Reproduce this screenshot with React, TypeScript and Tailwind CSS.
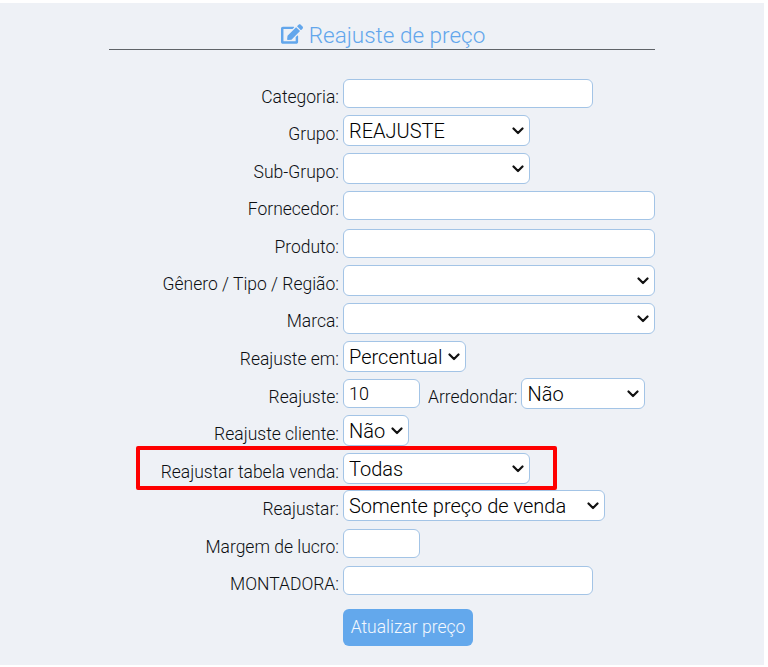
import React from "react";

const font = "font-['Roboto',sans-serif]";
const field = "block h-[29px] rounded-[6px] border border-[#a3c4e6] bg-white px-[5px] text-[18px] font-light leading-[27px] text-black outline-none";

function Select({ width, value, extra }: { width: string; value?: string; extra?: string }) {
  return (
    <div className={`relative shrink-0 ${width}`}>
      <select
        defaultValue={value ?? ""}
        className={`block h-[31px] w-full appearance-none rounded-[6px] border border-[#a3c4e6] bg-white pl-[5px] pr-[20px] text-[20px] font-light text-black outline-none ${extra ?? ""}`}
      >
        <option>{value ?? ""}</option>
      </select>
      <svg
        className="pointer-events-none absolute right-[6px] top-[12px]"
        width="12"
        height="8"
        viewBox="0 0 12 8"
        fill="none"
        stroke="#111"
        strokeWidth="2.2"
        strokeLinecap="round"
        strokeLinejoin="round"
        aria-hidden="true"
      >
        <path d="M1.5 1.5 6 6l4.5-4.5" />
      </svg>
    </div>
  );
}

function Label({ children, offset }: { children: React.ReactNode; offset: string }) {
  return <label className={`w-[230px] shrink-0 text-right text-[17.5px] font-light leading-[19px] text-[#0c0f12] ${offset}`}>{children}</label>;
}

function Row({ label, mt, offset, children }: { label: string; mt: string; offset: string; children: React.ReactNode }) {
  return (
    <div className={`flex items-start gap-[4px] ${mt}`}>
      <Label offset={offset}>{label}</Label>
      {children}
    </div>
  );
}

export default function App() {
  return (
    <div className={`${font} h-[667px] w-[768px] bg-white pt-[3px] pr-[4px]`}>
      <div className="relative h-[662px] bg-[#eef1f6] pt-[15px]">
        <div className="ml-[109px] w-[546px]">
          <h1 className="flex h-[32px] items-end justify-center gap-[6px] border-b border-[#5f6368] pl-[2px] text-[22.5px] font-light leading-[28px] text-[#62a6ec]">
            <svg width="22" height="20" viewBox="0 0 576 512" fill="currentColor" aria-hidden="true" className="mb-[5px]">
              <path d="M402.6 83.2l90.2 90.2c3.8 3.8 3.8 10 0 13.8L274.4 405.6l-92.8 10.3c-12.4 1.4-22.9-9.1-21.5-21.5l10.3-92.8L388.8 83.2c3.8-3.8 10-3.8 13.8 0zm162-22.9l-48.8-48.8c-15.2-15.2-39.9-15.2-55.2 0l-35.4 35.4c-3.8 3.8-3.8 10 0 13.8l90.2 90.2c3.8 3.8 10 3.8 13.8 0l35.4-35.4c15.2-15.3 15.2-40 0-55.2zM384 346.2V448H64V128h229.8c3.2 0 6.2-1.3 8.5-3.5l40-40c7.6-7.6 2.2-20.5-8.5-20.5H48C21.5 64 0 85.5 0 112v352c0 26.5 21.5 48 48 48h352c26.5 0 48-21.5 48-48V306.2c0-10.7-12.9-16-20.5-8.5l-40 40c-2.2 2.3-3.5 5.3-3.5 8.5z" />
            </svg>
            <span>Reajuste de preço</span>
          </h1>

          <div className="mt-[29px]">
            <Row label="Categoria:" mt="mt-0" offset="mt-[9px]"><input className={`${field} w-[250px]`} /></Row>
            <Row label="Grupo:" mt="mt-[7px]" offset="mt-[10px]"><Select width="w-[187px]" value="REAJUSTE" /></Row>
            <Row label="Sub-Grupo:" mt="mt-[7px]" offset="mt-[10px]"><Select width="w-[187px]" /></Row>
            <Row label="Fornecedor:" mt="mt-[7px]" offset="mt-[9px]"><input className={`${field} w-[312px]`} /></Row>
            <Row label="Produto:" mt="mt-[9px]" offset="mt-[9px]"><input className={`${field} w-[312px]`} /></Row>
            <Row label="Gênero / Tipo / Região:" mt="mt-[7px]" offset="mt-[10px]"><Select width="w-[312px]" /></Row>
            <Row label="Marca:" mt="mt-[7px]" offset="mt-[9px]"><Select width="w-[312px]" /></Row>
            <Row label="Reajuste em:" mt="mt-[7px]" offset="mt-[9px]"><Select width="w-[123px]" value="Percentual" /></Row>
            <div className="mt-[6px] flex items-start gap-[4px]">
              <Label offset="mt-[10px]">Reajuste:</Label>
              <input defaultValue="10" className={`${field} mt-[1px] w-[77px]`} />
              <span className="ml-[4px] mt-[10px] text-[17.5px] font-light leading-[19px] text-[#0c0f12]">Arredondar:</span>
              <Select width="w-[124px]" value="Não" extra="pb-[4px]" />
            </div>
            <Row label="Reajuste cliente:" mt="mt-[6px]" offset="mt-[10px]"><Select width="w-[66px]" value="Não" /></Row>
            <Row label="Reajustar tabela venda:" mt="mt-[7px]" offset="mt-[10px]"><Select width="w-[187px]" value="Todas" /></Row>
            <Row label="Reajustar:" mt="mt-[6px]" offset="mt-[10px]"><Select width="w-[262px]" value="Somente preço de venda" /></Row>
            <Row label="Margem de lucro:" mt="mt-[8px]" offset="mt-[9px]"><input className={`${field} w-[77px]`} /></Row>
            <Row label="MONTADORA:" mt="mt-[8px]" offset="mt-[9px]"><input className={`${field} w-[250px]`} /></Row>
            <div className="mt-[14px] pl-[234px]">
              <button className="h-[37px] w-[130px] rounded-[6px] bg-[#63a8ec] text-[17.5px] font-light text-[#f4f8fe]">Atualizar preço</button>
            </div>
          </div>
        </div>
        <div className="pointer-events-none absolute left-[136px] top-[443px] h-[44px] w-[421px] rounded-[2px] border-[4px] border-[#fe0000]" />
      </div>
    </div>
  );
}
